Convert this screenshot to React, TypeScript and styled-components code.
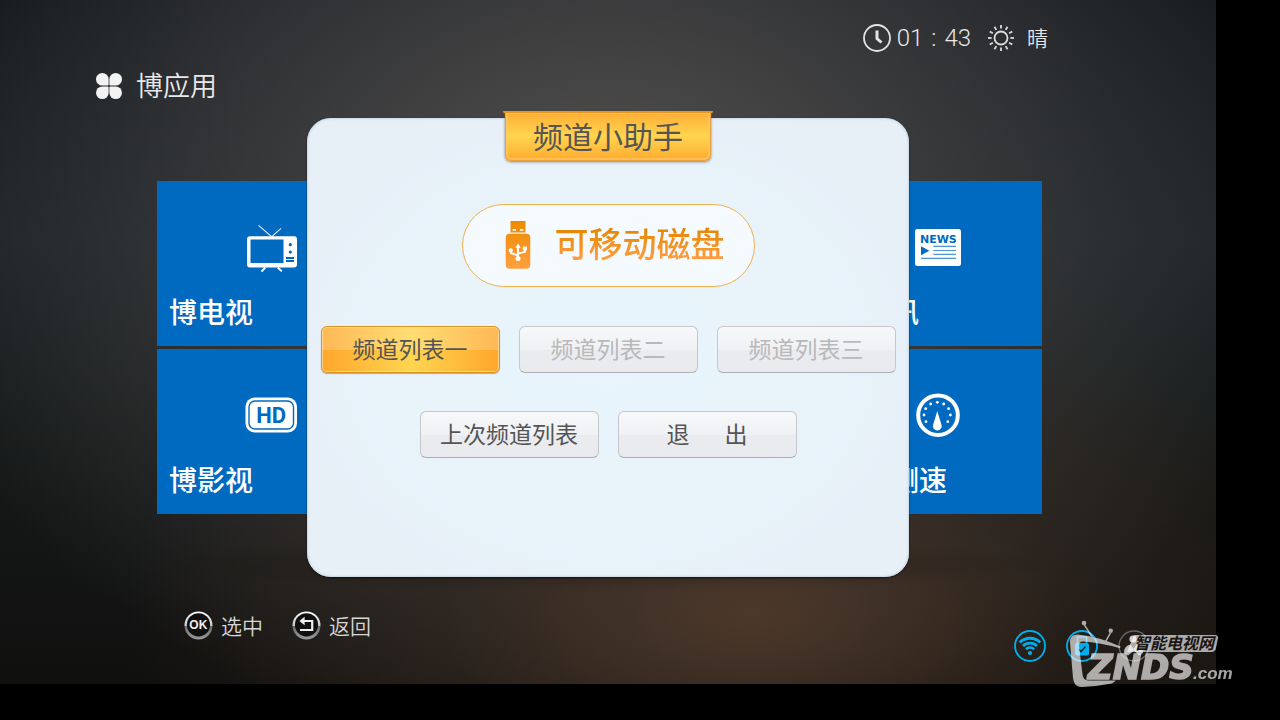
import React from "react";
import styled, { createGlobalStyle, css } from "styled-components";

const cjk = `"Noto Sans CJK SC", sans-serif`;

const GlobalStyle = createGlobalStyle`
  * { box-sizing: border-box; }
  body { margin: 0; background: #000; font-family: ${cjk}; }
  button { font-family: inherit; margin: 0; padding: 0; border: 0; cursor: pointer; }
  h1, h2, p { margin: 0; font-weight: 400; }
  svg { display: block; flex: none; }
`;

/* The TV picture leaves an overscan border on the right and at the bottom. */
const Page = styled.div`
  position: relative;
  display: flex;
  min-height: 100vh;
  padding: 0 5vw 5vh 0;
  background: #000;
`;

const Screen = styled.main`
  position: relative;
  flex: 1;
  display: flex;
  flex-direction: column;
  color: #e8e8e8;
  background:
    radial-gradient(ellipse 38% 4% at 50% 82.5%, rgba(0, 0, 0, 0.3), transparent),
    radial-gradient(ellipse 52% 46% at 62% 90%, rgba(84, 60, 44, 0.85), rgba(60, 44, 32, 0.45) 50%, transparent),
    radial-gradient(ellipse 60% 80% at 50% 30%, rgba(84, 81, 79, 1), rgba(66, 66, 67, 0.75) 45%, transparent),
    linear-gradient(180deg, #13171c 0%, #1c2125 35%, #171a1a 60%, #10100f 100%);
`;

const StatusBar = styled.header`
  display: flex;
  justify-content: flex-end;
  align-items: center;
  height: 28px;
  margin-top: 24px;
  padding-right: 168px;
`;

const Time = styled.time`
  display: flex;
  gap: 8px;
  margin: 0 17px 0 6px;
  font: 300 24px/28px Roboto, sans-serif;
`;

const Weather = styled.span`
  margin-left: 13px;
  padding-bottom: 3px;
  font-size: 21px;
  line-height: 28px;
  font-weight: 350;
`;

const TitleRow = styled.div`
  display: flex;
  align-items: center;
  gap: 14px;
  margin-top: 14px;
  padding-left: 96px;
`;

const Title = styled.h1`
  padding-bottom: 2px;
  font-size: 27px;
  line-height: 38px;
  font-weight: 350;
`;

const Tiles = styled.nav`
  display: grid;
  grid-template-columns: 1fr 191px;
  gap: 3px;
  margin-top: 75px;
  padding: 0 174px 0 157px;
`;

const Tile = styled.button<{ $indent: number }>`
  display: flex;
  flex-direction: column;
  align-items: flex-start;
  gap: 17px;
  padding: 41px 12px 15px;
  background: #006ac1;
  color: #fff;
  font-size: 28px;
  font-weight: 500;
  line-height: 40px;

  svg { margin-left: ${(p) => p.$indent}px; }
`;

const Footer = styled.footer`
  display: flex;
  justify-content: space-between;
  height: 51px;
  margin-top: auto;
  margin-bottom: 22px;
  padding: 0 66px 0 184px;
`;

const Hints = styled.div`
  display: flex;
  align-self: flex-start;
  gap: 29px;
`;

const Hint = styled.button`
  display: flex;
  align-items: center;
  gap: 8px;
  background: none;
  color: #d6d6d6;
  font-size: 21px;
  line-height: 26px;
  font-weight: 350;

  span { padding-bottom: 2px; }
`;

const Connections = styled.div`
  display: flex;
  align-self: flex-end;
  gap: 20px;
`;

const Overlay = styled.div`
  position: absolute;
  inset: 0;
  display: flex;
  align-items: center;
  justify-content: center;
  padding-top: 11px;
`;

const Dialog = styled.section`
  display: flex;
  flex-direction: column;
  align-items: center;
  width: 602px;
  padding-bottom: 119px;
  border-radius: 24px;
  background: radial-gradient(ellipse 60% 62% at 50% 52%, #e8f5fc 0%, #e8f3fa 55%, #e7eff7 100%);
  box-shadow: inset 0 0 2px 1px rgba(190, 205, 218, 0.7), 0 1px 2px rgba(0, 0, 0, 0.6);
`;

const Ribbon = styled.h2`
  position: relative;
  width: 206px;
  height: 50px;
  margin-top: -7px;
  border-radius: 0 0 6px 6px;
  background: linear-gradient(180deg, #ffab33 0%, #ffd54f 50%, #ffa92e 100%);
  box-shadow:
    inset 0 2px 0 #e8951d,
    inset 0 0 0 1px #e9a03a,
    inset 0 0 0 3px rgba(255, 200, 110, 0.6),
    0 1px 3px rgba(60, 60, 60, 0.6);
  color: #555;
  font-size: 30px;
  line-height: 48px;
  text-align: center;

  &::before {
    content: "";
    position: absolute;
    inset: 0 -2px auto;
    height: 7px;
    background: linear-gradient(#e8951d 2px, #8a5a1c 2px);
    clip-path: polygon(0 0, 100% 0, calc(100% - 2px) 100%, calc(100% - 2px) 1px, 2px 1px, 2px 100%);
  }
`;

const DiskButton = styled.button`
  display: flex;
  align-items: center;
  gap: 24px;
  width: 293px;
  height: 83px;
  margin: 43px 0 39px;
  padding: 0 0 2px 42px;
  border: 1px solid #f2b04a;
  border-radius: 42px;
  background: #f5fafe;
  font-size: 34px;
  font-weight: 500;
  line-height: 50px;
`;

const DiskName = styled.span`
  margin-bottom: 4px;
  background: linear-gradient(180deg, #e58600 20%, #ff9b3d 80%);
  background-clip: text;
  -webkit-background-clip: text;
  color: transparent;
`;

const ButtonRow = styled.div`
  display: flex;
  justify-content: center;
  gap: 19px;

  & + & { margin-top: 38px; }
`;

const activeLook = css`
  border-color: #dc9120;
  background:
    linear-gradient(180deg, rgba(255, 255, 255, 0.2) 50%, transparent 50%),
    linear-gradient(90deg, #ffa72c, #ffd550 50%, #ffa72c);
  box-shadow: inset 0 0 0 1px rgba(255, 225, 160, 0.8), 0 1px 1px rgba(120, 100, 60, 0.5);
`;

const ListButton = styled.button<{ $active?: boolean }>`
  display: flex;
  align-items: center;
  justify-content: center;
  gap: 35px;
  width: 179px;
  height: 47px;
  padding-bottom: 3px;
  border: 1px solid #c6c7cc;
  border-bottom-color: #adaeb3;
  border-radius: 6px;
  background: linear-gradient(180deg, #f7f8fa, #f0f1f4 50%, #ebecf0 50%, #e9eaee);
  color: #555;
  font-size: 23px;
  line-height: 32px;

  &:disabled { color: #b9b9b9; cursor: default; }

  ${(p) => p.$active && activeLook}
`;

const Watermark = styled.svg`
  position: absolute;
  right: 46px;
  bottom: 32px;
`;

const CloverIcon = () => (
  <svg width="26" height="26" viewBox="0 0 26 26" fill="#f2f2f2" aria-hidden="true">
    {[0, 90, 180, 270].map((a) => (
      <path key={a} transform={`rotate(${a} 13 13)`} d="M6.3 0A6.3 6.3 0 0 1 12.6 6.3V11.6Q12.6 12.6 11.6 12.6H6.3A6.3 6.3 0 0 1 6.3 0Z" />
    ))}
  </svg>
);

const ClockIcon = () => (
  <svg width="28" height="28" viewBox="0 0 28 28" fill="none" stroke="#e4e4e4" aria-hidden="true">
    <circle cx="14" cy="14" r="13" strokeWidth="1.8" />
    <path d="M14 6.5V14.5L18.5 18.5" strokeWidth="3" />
  </svg>
);

const SunIcon = () => (
  <svg width="26" height="26" viewBox="0 0 26 26" fill="none" stroke="#dcdcdc" strokeWidth="1.8" aria-hidden="true">
    <circle cx="13" cy="13" r="6.5" />
    {Array.from({ length: 12 }, (_, i) => (
      <path key={i} d="M13 0V3.6" transform={`rotate(${i * 30} 13 13)`} />
    ))}
  </svg>
);

const TvIcon = () => (
  <svg width="52" height="52" viewBox="0 0 52 52" aria-hidden="true">
    <path fill="none" stroke="#fff" strokeWidth="1.1" opacity="0.85" d="M13.5 3.3L26.7 14.7L36 6.3" />
    <path fill="none" stroke="#fff" strokeWidth="2" d="M20.3 45.5L16.5 49.6M32.7 45.5L36.8 49.4" />
    <path fill="#fff" fillRule="evenodd" d="M5 14.2H49Q52 14.2 52 17.2V42.4Q52 45.4 49 45.4H5Q2 45.4 2 42.4V17.2Q2 14.2 5 14.2ZM5.5 17.6V41H38.5V17.6Z" />
    <g fill="#006ac1">
      <circle cx="45.3" cy="22.7" r="1.6" />
      <circle cx="45.3" cy="30.1" r="1.6" />
      <path d="M41 35H49V37H41ZM41 38H49V40H41Z" />
    </g>
  </svg>
);

const HdIcon = () => (
  <svg width="52" height="52" viewBox="0 0 52 52" aria-hidden="true">
    <rect x="0.5" y="7.5" width="51.5" height="35" rx="9" fill="#fff" />
    <rect x="4" y="11" width="44.5" height="28" rx="6" fill="none" stroke="#006ac1" strokeWidth="1.4" />
    <text x="26.2" y="32.7" textAnchor="middle" fill="#006ac1" fontFamily="Roboto, sans-serif" fontWeight="700" fontSize="22">HD</text>
  </svg>
);

const NewsIcon = () => (
  <svg width="52" height="52" viewBox="0 0 52 52" aria-hidden="true">
    <rect x="3" y="7" width="46" height="37" rx="2.5" fill="#fff" />
    <text x="26.4" y="20.8" textAnchor="middle" fill="#006ac1" fontFamily="DejaVu Sans, sans-serif" fontWeight="700" fontSize="11">NEWS</text>
    <path fill="#006ac1" d="M9 24.3V33.3L17.3 28.8Z" />
    <path stroke="#4d95d3" strokeWidth="1.2" d="M21.3 24.3H44M21.3 28.5H44M21.3 32.4H44M9 36.4H44" />
  </svg>
);

const GaugeIcon = () => (
  <svg width="52" height="52" viewBox="0 0 52 52" fill="#fff" aria-hidden="true">
    <circle cx="26" cy="25.2" r="19.8" fill="none" stroke="#fff" strokeWidth="4" />
    <path d="M25.3 21L29.4 34.5A4.4 4.4 0 1 1 21.2 34.5Z" />
    {[[25.3, 12.3], [18.7, 14], [31.7, 14], [13.7, 18.7], [36.6, 18.7], [12, 25], [38.4, 25], [14, 31.7], [35.8, 31.7]].map(([x, y]) => (
      <circle key={`${x}-${y}`} cx={x} cy={y} r="1.4" />
    ))}
  </svg>
);

const KeyRing = ({ children }: { children: React.ReactNode }) => (
  <svg width="29" height="29" viewBox="0 0 29 29" aria-hidden="true">
    <defs>
      <linearGradient id="ring" x1="0" y1="0" x2="0" y2="1">
        <stop offset="0" stopColor="#fff" />
        <stop offset="0.5" stopColor="#c8c8c8" />
        <stop offset="0.52" stopColor="#6a6a6a" />
        <stop offset="1" stopColor="#9a9a9a" />
      </linearGradient>
    </defs>
    <circle cx="14.5" cy="14.5" r="14" fill="url(#ring)" />
    <circle cx="14.5" cy="13.8" r="11.6" fill="#101010" />
    {children}
  </svg>
);

const UsbIcon = () => (
  <svg width="26" height="48" viewBox="0 0 26 48" aria-hidden="true">
    <defs>
      <linearGradient id="usb" gradientUnits="userSpaceOnUse" x1="0" y1="0" x2="0" y2="48">
        <stop offset="0" stopColor="#ee8a00" />
        <stop offset="1" stopColor="#ffa040" />
      </linearGradient>
    </defs>
    <path fill="url(#usb)" fillRule="evenodd" d="M5.5 0H20.5V11.5H5.5ZM7.6 8V9.8H11V8ZM15 8V9.8H18.4V8Z" />
    <rect x="0.7" y="12.7" width="24.6" height="35" rx="4" fill="url(#usb)" />
    <g fill="none" stroke="#fff" strokeWidth="1.9">
      <path d="M13 26V37M13 34.4L5.8 32V29.5M13 32.6L20 30.8V27.5" />
    </g>
    <g fill="#fff">
      <path d="M13 22.4L15.7 26.8H10.3Z" />
      <circle cx="13" cy="37.6" r="2.5" />
      <circle cx="5.8" cy="29.3" r="2.1" />
      <rect x="17.8" y="25.5" width="4.2" height="3.8" />
    </g>
  </svg>
);

const WifiIcon = () => (
  <svg width="32" height="32" viewBox="0 0 32 32" fill="none" stroke="#00aeef" role="img" aria-label="Wi-Fi">
    <circle cx="16" cy="16" r="15" strokeWidth="1.8" />
    <g strokeWidth="2.8">
      <path d="M5.8 12.4A14.6 14.6 0 0 1 26.2 12.4" />
      <path d="M9 15.9A10 10 0 0 1 23 15.9" />
      <path d="M12 19.3A5.8 5.8 0 0 1 20 19.3" />
    </g>
    <circle cx="16" cy="23" r="2.1" fill="#00aeef" stroke="none" />
  </svg>
);

const DriveIcon = () => (
  <svg width="32" height="32" viewBox="0 0 32 32" role="img" aria-label="USB">
    <circle cx="16" cy="16" r="15" fill="none" stroke="#00aeef" strokeWidth="1.8" />
    <path fill="none" stroke="#00aeef" strokeWidth="1.5" d="M11.5 13V7H20.5V13" />
    <rect x="9" y="13" width="14" height="12.5" rx="2" fill="#00aeef" />
    <path d="M12.5 19L15 21.6L19.5 16.6" fill="none" stroke="#12303c" strokeWidth="1.6" />
  </svg>
);

const UserIcon = () => (
  <svg width="32" height="32" viewBox="0 0 32 32" role="img" aria-label="User">
    <circle cx="16" cy="16" r="15" fill="none" stroke="#666" strokeWidth="1.4" />
    <circle cx="15" cy="9" r="3.6" fill="#ccc" />
    <path fill="#bbb" d="M6 23Q6 15.5 12.5 14.5L15.5 19L18.5 14.5Q25 15.5 25 23L21 25.5L16 20.5L10 25.5Z" />
  </svg>
);

const SiteMark = () => (
  <Watermark width="168" height="68" viewBox="0 0 168 68" role="img" aria-label="智能电视网 ZNDS.com">
    <g fill="#fff" opacity="0.64">
      <circle cx="18" cy="3" r="2.3" />
      <circle cx="44.7" cy="10.7" r="2.2" />
      <path d="M17.4 4.8L25.4 17.2L27.6 17.8L19 4.4ZM43.8 12.4L39 21L40.4 21.6L45.4 12.8Z" />
      <path d="M4 22Q4 14.6 12 14.6Q32 16.6 54.5 26.6L54 28.2Q34 22.4 17 21.4Q12.6 21.6 13 26L16.6 55Q17.4 60 22 60.6H50L46 63.4Q30 66.4 16 67Q8 67.2 7 58Z" />
      <path d="M68 15H149Q152.6 15 152 18.5L149.8 28.6Q149 32 145.4 32H61Z" />
      <text x="22" y="59.3" stroke="#fff" strokeWidth="1.6" fontFamily="DejaVu Sans, sans-serif" fontWeight="700" fontSize="34" fontStyle="italic">ZNDS</text>
      <text x="127" y="59.3" fontFamily="Liberation Sans, sans-serif" fontWeight="700" fontSize="17" fontStyle="italic">.com</text>
    </g>
    <text x="68" y="29" fill="#181716" fontFamily="Noto Sans CJK SC, sans-serif" fontWeight="700" fontSize="16" fontStyle="italic">智能电视网</text>
  </Watermark>
);

export default function App() {
  return (
    <Page>
      <GlobalStyle />
      <Screen>
        <StatusBar>
          <ClockIcon />
          <Time><span>01</span><span>:</span><span>43</span></Time>
          <SunIcon />
          <Weather>晴</Weather>
        </StatusBar>
        <TitleRow>
          <CloverIcon />
          <Title>博应用</Title>
        </TitleRow>
        <Tiles>
          <Tile $indent={76}><TvIcon />博电视</Tile>
          <Tile $indent={49}><NewsIcon />资讯</Tile>
          <Tile $indent={76}><HdIcon />博影视</Tile>
          <Tile $indent={49}><GaugeIcon />博测速</Tile>
        </Tiles>
        <Footer>
          <Hints>
            <Hint>
              <KeyRing>
                <text x="14.3" y="18" textAnchor="middle" fill="#eee" fontFamily="Liberation Sans, sans-serif" fontWeight="700" fontSize="12">OK</text>
              </KeyRing>
              <span>选中</span>
            </Hint>
            <Hint>
              <KeyRing>
                <path d="M8 19H20.2V10H11" fill="none" stroke="#eee" strokeWidth="2.2" />
                <path d="M12.6 5.8V14.2L7.4 10Z" fill="#eee" />
              </KeyRing>
              <span>返回</span>
            </Hint>
          </Hints>
          <Connections>
            <WifiIcon />
            <DriveIcon />
            <UserIcon />
          </Connections>
        </Footer>
        <Overlay>
          <Dialog role="dialog" aria-labelledby="helper-title">
            <Ribbon id="helper-title">频道小助手</Ribbon>
            <DiskButton>
              <UsbIcon />
              <DiskName>可移动磁盘</DiskName>
            </DiskButton>
            <ButtonRow>
              <ListButton $active>频道列表一</ListButton>
              <ListButton disabled>频道列表二</ListButton>
              <ListButton disabled>频道列表三</ListButton>
            </ButtonRow>
            <ButtonRow>
              <ListButton>上次频道列表</ListButton>
              <ListButton><span>退</span><span>出</span></ListButton>
            </ButtonRow>
          </Dialog>
        </Overlay>
      </Screen>
      <SiteMark />
    </Page>
  );
}
